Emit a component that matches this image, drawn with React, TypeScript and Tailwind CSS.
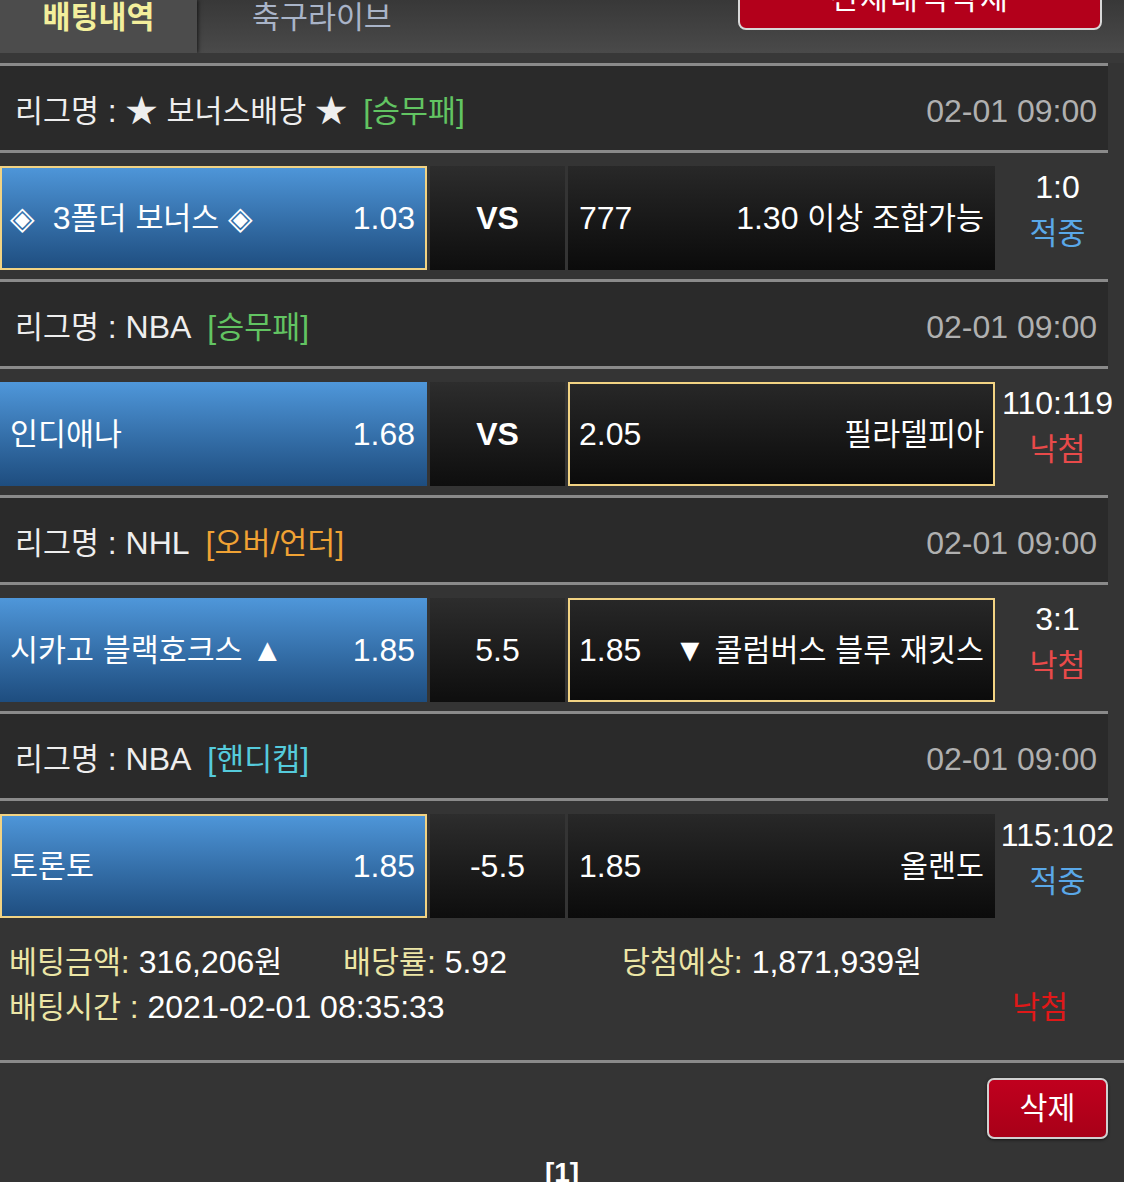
import React from "react";

const HANGUL = /([\uAC00-\uD7A3]+)/;

function T({ t }: { t: string }) {
  return (
    <>
      {t.split(HANGUL).map((s, i) =>
        HANGUL.test(s) ? (
          <span key={i} className="text-[0.95em]">
            {s}
          </span>
        ) : (
          <React.Fragment key={i}>{s}</React.Fragment>
        )
      )}
    </>
  );
}

const Line = () => <div className="h-[3px] w-[1108px] bg-[#8a8a8a]" />;

type League = { name: string; tag: string; tagColor: string };

function LeagueRow({ name, tag, tagColor }: League) {
  return (
    <div className="h-[84px] w-[1108px] bg-[#2a2a2a] flex items-center justify-between pl-[15px] pr-[11px] pt-[5px]">
      <div className="text-[#eeeeee] whitespace-pre">
        <T t={"리그명 : " + name} />
        <span className={"ml-[16px] " + tagColor}>
          <T t={tag} />
        </span>
      </div>
      <div className="text-[#b0b0b0]">02-01 09:00</div>
    </div>
  );
}

type Match = {
  home: string;
  homeOdd: string;
  mid: string;
  midBold?: boolean;
  awayOdd: string;
  away: string;
  sel: "home" | "away";
  score: string;
  result: "hit" | "miss";
};

function MatchRow(m: Match) {
  const ring = "shadow-[inset_0_0_0_2px_#f2d383]";
  return (
    <div className="h-[126px] w-[1108px] pt-[13px] flex">
      <div
        className={
          "w-[427px] h-[104px] shrink-0 bg-linear-to-b from-[#4f97da] to-[#1e4d7f] flex items-center justify-between pl-[10px] pr-[12px] text-white whitespace-pre " +
          (m.sel === "home" ? ring : "")
        }
      >
        <span>
          <T t={m.home} />
        </span>
        <span>{m.homeOdd}</span>
      </div>
      <div
        className={
          "ml-[3px] w-[135px] h-[104px] shrink-0 bg-linear-to-b from-[#2d2d2d] to-[#0e0e0e] flex items-center justify-center text-white " +
          (m.midBold ? "font-bold" : "")
        }
      >
        {m.mid}
      </div>
      <div
        className={
          "ml-[3px] w-[427px] h-[104px] shrink-0 bg-linear-to-b from-[#282828] to-[#0b0b0b] flex items-center justify-between pl-[11px] pr-[11px] text-white whitespace-pre " +
          (m.sel === "away" ? ring : "")
        }
      >
        <span>{m.awayOdd}</span>
        <span>
          <T t={m.away} />
        </span>
      </div>
      <div className="w-[125px] shrink-0 h-[104px] flex flex-col items-center justify-center pb-[16px] leading-[46px] whitespace-nowrap">
        <div className="text-white">{m.score}</div>
        <div className={m.result === "hit" ? "text-[#5aa8e8]" : "text-[#e84a4a]"}>
          <T t={m.result === "hit" ? "적중" : "낙첨"} />
        </div>
      </div>
    </div>
  );
}

const blocks: { league: League; match: Match }[] = [
  {
    league: { name: "★ 보너스배당 ★", tag: "[승무패]", tagColor: "text-[#62c462]" },
    match: {
      home: "◈  3폴더 보너스 ◈",
      homeOdd: "1.03",
      mid: "VS",
      midBold: true,
      awayOdd: "777",
      away: "1.30 이상 조합가능",
      sel: "home",
      score: "1:0",
      result: "hit",
    },
  },
  {
    league: { name: "NBA", tag: "[승무패]", tagColor: "text-[#62c462]" },
    match: {
      home: "인디애나",
      homeOdd: "1.68",
      mid: "VS",
      midBold: true,
      awayOdd: "2.05",
      away: "필라델피아",
      sel: "away",
      score: "110:119",
      result: "miss",
    },
  },
  {
    league: { name: "NHL", tag: "[오버/언더]", tagColor: "text-[#f0a234]" },
    match: {
      home: "시카고 블랙호크스 ▲",
      homeOdd: "1.85",
      mid: "5.5",
      awayOdd: "1.85",
      away: "▼ 콜럼버스 블루 재킷스",
      sel: "away",
      score: "3:1",
      result: "miss",
    },
  },
  {
    league: { name: "NBA", tag: "[핸디캡]", tagColor: "text-[#55cbdc]" },
    match: {
      home: "토론토",
      homeOdd: "1.85",
      mid: "-5.5",
      awayOdd: "1.85",
      away: "올랜도",
      sel: "home",
      score: "115:102",
      result: "hit",
    },
  },
];

export default function App() {
  return (
    <div className="w-[1124px] min-h-[1182px] overflow-hidden bg-[#343434] text-[32px] font-['Liberation_Sans','Noto_Sans_CJK_KR',sans-serif]">
      {/* tab bar */}
      <div className="h-[53px] bg-linear-to-b from-[#383838] to-[#4a4a4a] flex overflow-hidden">
        <div className="w-[197px] h-[53px] shrink-0 bg-[#4c4c4c] shadow-[1px_0_4px_rgba(0,0,0,0.7)] flex justify-center">
          <span className="leading-[34px] text-[#f3ef9c] font-bold">
            <T t="배팅내역" />
          </span>
        </div>
        <div className="ml-[55px] leading-[34px] text-[#a9b4c8]">
          <T t="축구라이브" />
        </div>
        <div className="ml-auto mr-[22px] mt-[-32px] w-[364px] h-[62px] shrink-0 rounded-[8px] border-2 border-[#d8d8d8] bg-[#b3001b] flex items-center justify-center text-white tracking-[2px] whitespace-pre">
          <T t="전체내역 삭제" />
        </div>
      </div>
      <div className="h-[10px] bg-[#383838]" />

      {blocks.map((b, i) => (
        <div key={i}>
          <Line />
          <LeagueRow {...b.league} />
          <Line />
          <MatchRow {...b.match} />
        </div>
      ))}

      {/* summary */}
      <div className="h-[133px] pt-[13px] pl-[9px] whitespace-pre">
        <div className="flex leading-[45px]">
          <div className="w-[334px]">
            <span className="text-[#ece6a6]">
              <T t="베팅금액:" />
            </span>
            <span className="text-white">
              {" "}
              <T t="316,206원" />
            </span>
          </div>
          <div className="w-[279px]">
            <span className="text-[#ece6a6]">
              <T t="배당률:" />
            </span>
            <span className="text-white"> 5.92</span>
          </div>
          <div>
            <span className="text-[#ece6a6]">
              <T t="당첨예상:" />
            </span>
            <span className="text-white">
              {" "}
              <T t="1,871,939원" />
            </span>
          </div>
        </div>
        <div className="flex justify-between leading-[45px] pr-[56px]">
          <div>
            <span className="text-[#ece6a6]">
              <T t="배팅시간 :" />
            </span>
            <span className="text-white"> 2021-02-01 08:35:33</span>
          </div>
          <div className="text-[#e01818]">
            <T t="낙첨" />
          </div>
        </div>
      </div>
      <div className="h-[3px] w-full bg-[#8a8a8a]" />

      <div className="flex justify-end pr-[16px] pt-[15px]">
        <div className="w-[121px] h-[61px] rounded-[7px] border-2 border-[#d0d0d0] bg-linear-to-b from-[#c0001e] to-[#a80018] flex items-center justify-center text-white shadow-[0_1px_3px_rgba(0,0,0,0.6)]">
          <T t="삭제" />
        </div>
      </div>
      <div className="mt-[18px] text-center text-white font-bold text-[28px] leading-[32px]">[1]</div>
    </div>
  );
}
